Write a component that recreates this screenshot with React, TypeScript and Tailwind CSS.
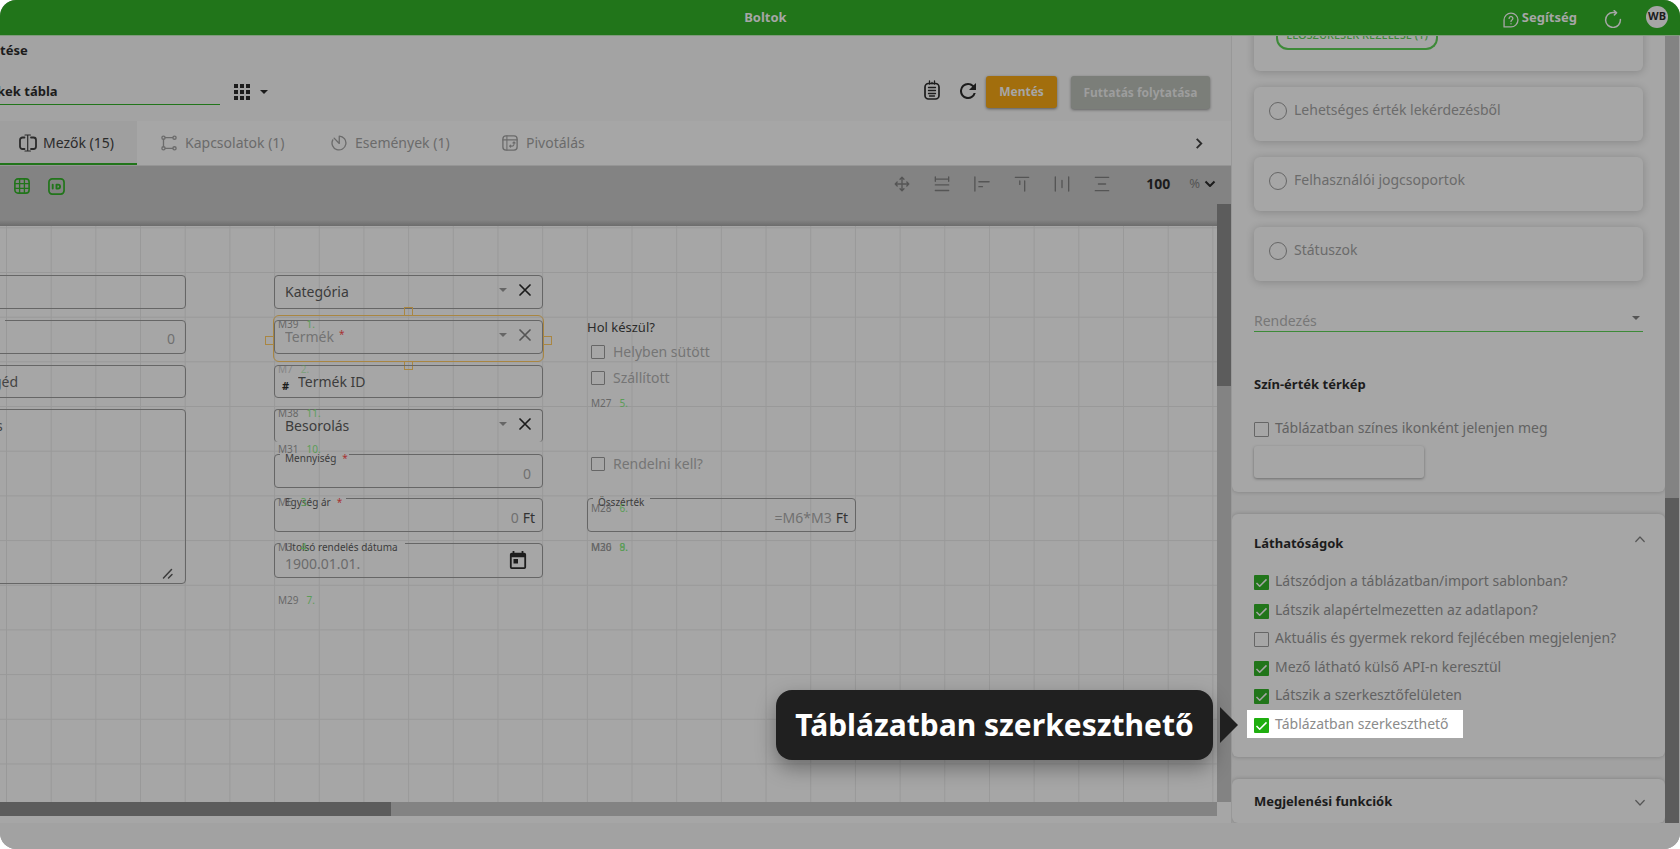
import React from "react";

type IconProps = { className?: string; children?: React.ReactNode; box?: string };

function Icon({ className = "size-4", children, box = "0 0 18 18" }: IconProps) {
  return (
    <svg
      className={`shrink-0 ${className}`}
      viewBox={box}
      fill="none"
      stroke="currentColor"
      strokeWidth="1.5"
      strokeLinecap="round"
      strokeLinejoin="round"
      aria-hidden="true"
    >
      {children}
    </svg>
  );
}

function Caret({ className }: { className: string }) {
  return (
    <Icon className={className} box="0 0 8 4">
      <path d="M0 0h8L4 4z" fill="currentColor" stroke="none" />
    </Icon>
  );
}

/* ---------- top bar ---------- */

function TopBar() {
  return (
    <header className="flex h-9 shrink-0 items-center border-b border-[#7f9a7c] bg-[#21751a] pb-0.5 text-[#a6a6a6]">
      <h1 className="flex-1 pl-7 text-center text-[13px] leading-5 font-bold">Boltok</h1>
      <a href="#help" className="mt-0.5 flex items-center gap-[3px] text-[13px] font-bold">
        <Icon className="mt-1 size-4">
          <path d="M1.2 9A7.8 7.8 0 1 1 9 16.8H1.2z" />
          <path d="M6.9 7.2a2.1 2.1 0 1 1 3.2 1.8c-.8.5-1.1.8-1.1 1.7M9 13.1v.1" />
        </Icon>
        Segítség
      </a>
      <button type="button" aria-label="Frissítés" className="mt-1 ml-[27px]">
        <Icon className="size-[18px]">
          <path d="M16.4 9.5A7.4 7.4 0 1 1 9 2.6h3" />
          <path d="M10.2 .6 12.6 2.7 10.4 4.9" />
        </Icon>
      </button>
      <span className="mr-3 ml-6 flex size-[22px] items-center justify-center rounded-full bg-[#a6a6a6] text-[11px] font-bold text-[#1c1c1c]">
        WB
      </span>
    </header>
  );
}

/* ---------- title, name and actions ---------- */

function Heading() {
  return (
    <div className="shrink-0 bg-[#a3a3a3] text-[#1c1c1c]">
      <h2 className="flex h-[29px] items-center text-[13px] font-bold">tése</h2>
      <div className="flex h-14 items-start pr-[21px]">
        <input
          aria-label="Tábla neve"
          defaultValue="kek tábla"
          className="mt-3 -ml-[3px] h-7 w-[223px] border-b border-[#21751a] bg-transparent text-[13px] font-bold outline-none"
        />
        <button type="button" aria-label="Nézet" className="mt-[19px] ml-3.5 flex items-center gap-2.5">
          <Icon className="size-4" box="0 0 16 16">
            <path
              d="M0 0h4v4H0zM6 0h4v4H6zM12 0h4v4h-4zM0 6h4v4H0zM6 6h4v4H6zM12 6h4v4h-4zM0 12h4v4H0zM6 12h4v4H6zM12 12h4v4h-4z"
              fill="currentColor"
              stroke="none"
            />
          </Icon>
          <Caret className="h-1 w-2" />
        </button>
        <span className="flex-1" />
        <button type="button" aria-label="Jegyzet" className="mt-[15px] mr-5">
          <Icon className="h-5 w-4" box="0 0 16 20">
            <rect x="1" y="3.5" width="14" height="15.5" rx="3.5" strokeWidth="1.7" />
            <path d="M5.5 1v3M10.5 1v3M8 2.5v1M4.500 7.5h7M4.500 10.500h7M4.500 13.500h7M5.500 16h5" strokeWidth="1.3" />
          </Icon>
        </button>
        <button type="button" aria-label="Újratöltés" className="mt-[18px] mr-2.5">
          <Icon className="size-4" box="4 4 16 16">
            <path
              d="M17.65 6.35A7.96 7.96 0 0 0 12 4a8 8 0 1 0 7.73 10h-2.08A6 6 0 1 1 12 6c1.66 0 3.14.69 4.22 1.78L13 11h7V4z"
              fill="currentColor"
              stroke="none"
            />
          </Icon>
        </button>
        <button
          type="button"
          className="mt-[11px] h-8 w-[71px] rounded-[3px] bg-[#a26e0d] text-xs font-bold text-[#a6a6a6] shadow-[0_1px_3px_rgba(0,0,0,0.45)]"
        >
          Mentés
        </button>
        <button
          type="button"
          className="mt-[11px] ml-3.5 h-[33px] w-[139px] rounded-[3px] bg-[#7b7e79] text-xs font-bold text-[#9d9d9d] shadow-[0_1px_3px_rgba(0,0,0,0.4)]"
        >
          Futtatás folytatása
        </button>
      </div>
    </div>
  );
}

function Tabs() {
  const base = "flex items-center gap-2 text-sm ";
  return (
    <nav className="flex h-[44px] shrink-0 bg-[#a6a6a6] text-[#6b6b6b]">
      <button type="button" className="flex w-[137px] items-center gap-1.5 border-b-2 border-[#21751a] bg-[#9f9f9f] pt-0.5 pl-[19px] text-sm text-[#2b2b2b]">
        <Icon className="size-[18px]">
          <path d="M5.5 3.5h-2A2.5 2.5 0 0 0 1 6v6.5A2.5 2.5 0 0 0 3.5 15h2M12 3.5h2.5A2.5 2.5 0 0 1 17 6v6.5a2.5 2.5 0 0 1-2.5 2.500H12" strokeWidth="1.8" />
          <path d="M8.7 1v16M6 1h5.4M6 17h5.4" strokeWidth="1.2" />
        </Icon>
        Mezők (15)
      </button>
      <button type="button" className={base + "w-[170px] pl-6"}>
        <Icon className="size-4">
          <circle cx="2.8" cy="3" r="1.8" />
          <circle cx="15.2" cy="3" r="1.8" />
          <circle cx="2.8" cy="15" r="1.8" />
          <circle cx="15.2" cy="15" r="1.8" />
          <path d="M4.8 3h8.4M4.8 15h8.4M2.8 5v8" />
        </Icon>
        Kapcsolatok (1)
      </button>
      <button type="button" className={base + "w-[171px] pl-6"}>
        <Icon className="size-4">
          <path d="M9.300 1.200A7.800 7.800 0 1 1 2 5.500M9.300 1.200v8.300L3.500 3.500" />
        </Icon>
        Események (1)
      </button>
      <button type="button" className={base + "w-[140px] pl-6"}>
        <Icon className="size-4">
          <rect x="1" y="1" width="16" height="16" rx="3.5" />
          <path d="M1 5.5h16M5.5 1v16" strokeWidth="1.2" />
          <path d="M13.5 8v2.5a2 2 0 0 1-2 2H8.5M12.3 9l1.200-1.200L14.700 9M9.700 11.300 8.500 12.500l1.200 1.200" strokeWidth="1.2" />
        </Icon>
        Pivotálás
      </button>
      <span className="flex-1" />
      <button type="button" aria-label="Következő fülek" className="mr-7 text-[#2b2b2b]">
        <Icon className="h-[11px] w-2" box="0 0 8 12">
          <path d="M1.5 1 6.5 6l-5 5" strokeWidth="2" strokeLinecap="butt" strokeLinejoin="miter" />
        </Icon>
      </button>
    </nav>
  );
}

function Toolbar() {
  const tools: [string, React.ReactNode][] = [
    ["Mozgatás", <path key="p" d="M9 1.5v15M1.5 9h15M6.8 3.6 9 1.4l2.200 2.200M6.800 14.400 9 16.600l2.200-2.200M3.600 6.800 1.400 9l2.200 2.200M14.400 6.800 16.600 9l-2.200 2.200" />],
    ["Azonos szélesség", <path key="p" d="M1.5 1v5M16.5 1v5M1.5 3.5h15M1.5 10h15M1.5 16.3h15" />],
    ["Balra igazítás", <path key="p" d="M1 1v16M5.5 6.5h11.5M5.5 12h4" />],
    ["Fel igazítás", <path key="p" d="M1.5 1.5h15M12 5.5v11.5M6.5 5.5v4" />],
    ["Vízszintes elosztás", <path key="p" d="M1.5 1v16M16.5 1v16M9 5v8" />],
    ["Függőleges elosztás", <path key="p" d="M1.5 1.5h15M1.5 16.5h15M5 9h8" />],
  ];
  return (
    <div className="flex h-[39px] shrink-0 items-center border-t border-[#959595] bg-[#838383] pb-0.5 text-[#555555]">
      <div className="mt-1 ml-3.5 flex gap-[18px] text-[#21751a]">
        <button type="button" aria-label="Rács">
          <Icon className="size-4">
            <rect x="1" y="1" width="16" height="16" rx="3.5" strokeWidth="1.8" />
            <path d="M6.3 1v16M11.7 1v16M1 6.3h16M1 11.7h16" />
          </Icon>
        </button>
        <button type="button" aria-label="Azonosítók">
          <Icon className="size-[17px]">
            <rect x="1" y="1" width="16" height="16" rx="3.5" strokeWidth="1.8" />
            <path d="M5 7v4.2M9 7h1.7a2.1 2.1 0 0 1 0 4.200H9z" strokeWidth="2" />
          </Icon>
        </button>
      </div>
      <span className="flex-1" />
      <div className="flex gap-6">
        {tools.map(([name, art]) => (
          <button key={name} type="button" aria-label={name}>
            <Icon className="size-4">{art}</Icon>
          </button>
        ))}
      </div>
      <input aria-label="Nagyítás" defaultValue="100" className="ml-9 w-8 bg-transparent text-sm font-bold text-[#1c1c1c] outline-none" />
      <span className="ml-[11px] text-[13px]">%</span>
      <button type="button" aria-label="Nagyítás választása" className="mr-[15px] ml-1 text-[#1c1c1c]">
        <Icon className="h-2 w-3" box="0 0 12 8">
          <path d="m1.5 1.5 4.5 4.5 4.5-4.5" strokeWidth="2" strokeLinecap="butt" />
        </Icon>
      </button>
    </div>
  );
}

/* ---------- form canvas ---------- */

function Frame({ notch }: { notch?: string }) {
  return (
    <fieldset aria-hidden="true" className="pointer-events-none absolute inset-0 rounded-[4px] border border-[#666666] pl-[5px]">
      {notch && <legend className={"h-0 " + notch} />}
    </fieldset>
  );
}

function Code({ at, id, order, className = "" }: { at: string; id: string; order: string; className?: string }) {
  return (
    <span className={`absolute flex gap-2 text-[10px] leading-3 text-[#686868] ${at} ${className}`}>
      <span>{id}</span>
      <span className="text-[#5b9d57]">{order}</span>
    </span>
  );
}

function PickField({ at, label, required, faded, open }: { at: string; label: string; required?: boolean; faded?: boolean; open?: boolean }) {
  return (
    <div
      className={`absolute flex w-[269px] items-center ${at} ${faded ? "text-[#737373]" : "text-[#3c3c3c]"} ${
        open ? "h-[33px] rounded-[4px] border border-b-0 border-[#666666] pr-[11px]" : "h-[34px] pr-3"
      }`}
    >
      {!open && <Frame />}
      <select
        aria-label={label}
        className={`absolute inset-0 appearance-none bg-transparent text-sm outline-none ${open ? "pl-2.5" : "pl-[11px]"}`}
      >
        <option>{label}</option>
      </select>
      {required && <span className="absolute top-1.5 left-[65px] text-[10px] leading-4 text-[#a83232]">*</span>}
      <span className="flex-1" />
      <Caret className="mb-1 h-1 w-2 text-[#666666]" />
      <button type="button" aria-label={"Törlés: " + label} className={`relative mb-1 ml-3 ${faded ? "text-[#555555]" : "text-[#1c1c1c]"}`}>
        <Icon className="size-3" box="0 0 12 12">
          <path d="m1 1 10 10M11 1 1 11" strokeWidth="1.7" />
        </Icon>
      </button>
    </div>
  );
}

function ValueField({
  at, label, value, notch, required, unit,
}: { at: string; label: string; value: string; notch: string; required?: boolean; unit?: string }) {
  return (
    <label className={`absolute h-[34px] w-[269px] ${at}`}>
      <Frame notch={notch} />
      <span className="absolute -top-1 left-[11px] text-[10px] leading-4 whitespace-nowrap text-[#3c3c3c]">
        {label}
        {required && <span className="ml-1.5 text-[#a83232]">*</span>}
      </span>
      <span className="absolute inset-x-0 bottom-1 flex items-center gap-1 pr-2">
        <input defaultValue={value} className="w-0 flex-1 bg-transparent text-right text-sm leading-5 text-[#707070] outline-none" />
        {unit ? <span className="text-sm leading-5 text-[#333333]">{unit}</span> : <span />}
      </span>
    </label>
  );
}

function CanvasCheck({ at, label }: { at: string; label: string }) {
  return (
    <label className={`absolute flex items-center gap-2 text-sm leading-5 text-[#757575] ${at}`}>
      <input type="checkbox" className="size-3.5 appearance-none rounded-[1px] border border-[#666666]" />
      {label}
    </label>
  );
}

const handle = "absolute size-[9px] border border-[#a98642]";

function Canvas() {
  return (
    <div className="flex min-h-0 flex-1 bg-[#a6a6a6]">
      <div className="flex min-w-0 flex-1 flex-col">
        <div className="flex h-[22px] shrink-0 flex-col justify-end bg-[#838383]">
          <div className="h-1.5 bg-linear-to-b from-[#838383] to-[#6c6c6c]" />
        </div>
        <div className="relative min-h-0 flex-1 overflow-hidden bg-[#a6a6a6]">
          <svg className="absolute inset-0 size-full" aria-hidden="true">
            <defs>
              <pattern id="grid" x="6" y="1.3" width="44.68" height="44.68" patternUnits="userSpaceOnUse">
                <path d="M.5 0v44.68M0 .5h44.68" stroke="#999999" strokeWidth="1" />
              </pattern>
            </defs>
            <rect width="100%" height="100%" fill="url(#grid)" />
          </svg>

          <label className="absolute top-[49px] -left-[83px] h-[34px] w-[269px]">
            <Frame />
            <input aria-label="Név" className="absolute inset-0 bg-transparent px-3 outline-none" />
          </label>
          <label className="absolute top-[94px] -left-[83px] h-[34px] w-[269px]">
            <Frame notch="w-[82px]" />
            <input aria-label="Darab" defaultValue="0" className="absolute inset-0 bg-transparent pt-1 pr-[11px] text-right text-sm text-[#707070] outline-none" />
          </label>
          <div className="absolute top-[139px] -left-[83px] h-[33px] w-[269px]">
            <Frame />
            <input aria-label="Segéd" placeholder="géd" className="absolute inset-0 bg-transparent pl-[76px] text-sm outline-none placeholder:text-[#444444]" />
          </div>
          <div className="absolute top-[183px] -left-[83px] h-[175px] w-[269px]">
            <Frame />
            <textarea
              aria-label="Leírás"
              placeholder="s"
              className="absolute inset-0 resize-none bg-transparent pt-[7px] pl-[79px] text-sm outline-none placeholder:text-[#444444]"
            />
            <Icon className="absolute right-3 bottom-1 size-3 text-[#3c3c3c]" box="0 0 12 12">
              <path d="M1.5 10 9.5 1.5M6.5 10l3.5-3.5" />
            </Icon>
          </div>

          <PickField at="top-[49px] left-[274px]" label="Kategória" />
          <PickField at="top-[94px] left-[274px]" label="Termék" required faded />
          <div className="pointer-events-none absolute top-[89px] left-[273px] h-[47px] w-[271px] rounded-[6px] border border-[#a98642]">
            <span className={handle + " -top-[9px] left-[130px]"} />
            <span className={handle + " -bottom-[9px] left-[130px]"} />
            <span className={handle + " top-5 -left-[9px]"} />
            <span className={handle + " top-5 -right-[9px]"} />
          </div>

          <div className="absolute top-[139px] left-[274px] h-[33px] w-[269px]">
            <Frame />
            <span className="absolute top-[13px] left-2 text-[11px] leading-4 font-bold text-[#1c1c1c]">#</span>
            <input aria-label="Termék ID" placeholder="Termék ID" className="absolute inset-0 bg-transparent pl-6 text-sm outline-none placeholder:text-[#3c3c3c]" />
          </div>
          <PickField at="top-[183px] left-[274px]" label="Besorolás" open />
          <ValueField at="top-[228px] left-[274px]" label="Mennyiség" value="0" notch="w-[69px]" required />
          <ValueField at="top-[272px] left-[274px]" label="Egység ár" value="0" notch="w-[66px]" required unit="Ft" />

          <label className="absolute top-[317px] left-[274px] h-[35px] w-[269px]">
            <Frame notch="w-[125px]" />
            <span className="absolute -top-1 left-[11px] text-[10px] leading-4 text-[#3c3c3c]">Utolsó rendelés dátuma</span>
            <input defaultValue="1900.01.01." className="absolute bottom-1 left-[11px] w-40 bg-transparent text-sm leading-5 text-[#6b6b6b] outline-none" />
            <Icon className="absolute top-2 right-4 h-[18px] w-[18px] text-[#1c1c1c]" box="3 2 18 20">
              <path
                d="M19 4h-1V2h-2v2H8V2H6v2H5a2 2 0 0 0-2 2v14a2 2 0 0 0 2 2h14a2 2 0 0 0 2-2V6a2 2 0 0 0-2-2zm0 16H5V9h14zM7 11h5v5H7z"
                fill="currentColor"
                stroke="none"
              />
            </Icon>
          </label>

          <Code at="top-[92px] left-[278px]" id="M39" order="1." />
          <Code at="top-[137px] left-[278px]" id="M7" order="2." className="opacity-50" />
          <Code at="top-[181px] left-[278px]" id="M38" order="11." />
          <Code at="top-[217px] left-[278px]" id="M31" order="10." />
          <Code at="top-[270px] left-[278px]" id="M6" order="3." />
          <Code at="top-[315px] left-[278px]" id="M3" order="4." />
          <Code at="top-[368px] left-[278px]" id="M29" order="7." />

          <span className="absolute top-[91px] left-[587px] text-[13px] leading-5 text-[#2b2b2b]">Hol készül?</span>
          <CanvasCheck at="top-[116px] left-[591px]" label="Helyben sütött" />
          <CanvasCheck at="top-[142px] left-[591px]" label="Szállított" />
          <Code at="top-[171px] left-[591px]" id="M27" order="5." />
          <CanvasCheck at="top-[228px] left-[591px]" label="Rendelni kell?" />
          <ValueField at="top-[272px] left-[587px]" label="Összérték" value="=M6*M3" notch="w-[57px]" unit="Ft" />
          <Code at="top-[276px] left-[591px]" id="M28" order="6." />
          <Code at="top-[315px] left-[591px]" id="M30" order="8." />
          <Code at="top-[315px] left-[591px]" id="M26" order="9." />
        </div>
        <div className="h-3.5 shrink-0 bg-[#838383]">
          <div className="h-full w-[391px] bg-[#5c5c5c]" />
        </div>
      </div>
      <div className="flex w-3.5 shrink-0 flex-col">
        <div className="flex-1 bg-[#838383]">
          <div className="h-[182px] bg-[#5c5c5c]" />
        </div>
        <div className="h-3.5" />
      </div>
    </div>
  );
}

/* ---------- side panel ---------- */

const card = "rounded-[6px] bg-[#a6a6a6] shadow-[0_1px_8px_rgba(0,0,0,0.2)]";
const section = "rounded-[6px] bg-[#a6a6a6] shadow-[0_0_4px_rgba(0,0,0,0.22)]";

function RadioCard({ label }: { label: string }) {
  return (
    <label className={card + " flex h-[54px] items-start gap-[7px] pt-[13px] pl-[15px] text-sm leading-5 text-[#6b6b6b]"}>
      <input type="radio" name="source" className="mt-0.5 size-[18px] appearance-none rounded-full border border-[#666666]" />
      {label}
    </label>
  );
}

function Check({ label, checked, marked }: { label: string; checked?: boolean; marked?: boolean }) {
  return (
    <label
      className={`-ml-[7px] flex h-[29px] w-fit items-center gap-1.5 pr-3.5 pl-[7px] text-sm leading-5 ${
        marked ? "bg-white text-[#8b8b8b]" : "text-[#626262]"
      }`}
    >
      <span className="mt-[3px] grid size-[15px]">
        <input
          type="checkbox"
          defaultChecked={checked}
          className={`col-start-1 row-start-1 appearance-none rounded-[1px] border border-[#666666] checked:border-0 ${
            marked ? "checked:bg-[#1fae0f]" : "checked:bg-[#21751a]"
          }`}
        />
        {checked && (
          <Icon className={`pointer-events-none col-start-1 row-start-1 size-[15px] ${marked ? "text-white" : "text-[#a6a6a6]"}`} box="0 0 15 15">
            <path d="m2.5 8 3.2 3.2 6.8-6.8" strokeLinecap="butt" />
          </Icon>
        )}
      </span>
      {label}
    </label>
  );
}

function SidePanel() {
  return (
    <aside className="flex w-[449px] shrink-0 border-l border-[#989898] bg-[#a1a1a1]">
      <div className="flex min-w-0 flex-1 flex-col gap-[22px] overflow-hidden">
        <section className={section + " -mt-5 shrink-0 px-[22px] pb-3.5"}>
          <div className="flex flex-col gap-4">
            <div className={card + " h-[55px] pl-[22px]"}>
              <button type="button" className="h-[34px] w-[162px] rounded-b-[12px] border-2 border-t-0 border-[#3d8a38] pt-1.5 text-[11px] font-medium whitespace-nowrap text-[#3d8a38]">
                ELŐSZŰRÉSEK KEZELÉSE (1)
              </button>
            </div>
            <RadioCard label="Lehetséges érték lekérdezésből" />
            <RadioCard label="Felhasználói jogcsoportok" />
            <RadioCard label="Státuszok" />
          </div>
          <div className="relative mt-[29px] flex h-[22px] items-center border-b border-[#3d8a38] text-[#555555]">
            <select aria-label="Rendezés" className="w-full appearance-none bg-transparent text-sm leading-5 text-[#777777] outline-none">
              <option>Rendezés</option>
            </select>
            <Caret className="mr-[3px] mb-1.5 h-1 w-2" />
          </div>
          <h3 className="mt-[42px] text-[13px] leading-5 font-bold text-[#1c1c1c]">Szín-érték térkép</h3>
          <div className="mt-[19px]">
            <Check label="Táblázatban színes ikonként jelenjen meg" />
          </div>
          <button type="button" aria-label="Színek" className="mt-1 block h-8 w-[170px] rounded-[3px] shadow-[0_1px_3px_rgba(0,0,0,0.35)]" />
        </section>

        <section className={section + " h-[243px] shrink-0 px-[22px] pt-[19px]"}>
          <h3 className="flex items-start justify-between text-[13px] leading-5 font-bold text-[#1c1c1c]">
            Láthatóságok
            <Icon className="mt-0.5 -mr-0.5 h-2 w-2.5 text-[#555555]" box="0 0 10 8">
              <path d="m.8 6.5 4.2-4.5 4.2 4.5" strokeWidth="1.200" />
            </Icon>
          </h3>
          <div className="mt-3.5 flex h-[171px] flex-col justify-between">
            <Check label="Látszódjon a táblázatban/import sablonban?" checked />
            <Check label="Látszik alapértelmezetten az adatlapon?" checked />
            <Check label="Aktuális és gyermek rekord fejlécében megjelenjen?" />
            <Check label="Mező látható külső API-n keresztül" checked />
            <Check label="Látszik a szerkesztőfelületen" checked />
            <Check label="Táblázatban szerkeszthető" checked marked />
          </div>
        </section>

        <section className={section + " min-h-[43px] flex-1 px-[22px] pt-3"}>
          <h3 className="flex items-center justify-between text-[13px] leading-5 font-bold text-[#1c1c1c]">
            Megjelenési funkciók
            <Icon className="mt-1 -mr-0.5 h-2 w-2.5 text-[#555555]" box="0 0 10 8">
              <path d="m.8 1.5 4.2 4.5 4.2-4.5" strokeWidth="1.200" />
            </Icon>
          </h3>
        </section>
      </div>
      <div className="flex w-3.5 shrink-0 flex-col justify-end bg-[#838383]">
        <div className="h-[325px] bg-[#5c5c5c]" />
      </div>
      <div className="w-px" />
    </aside>
  );
}

function Callout() {
  return (
    <div className="absolute right-[442px] bottom-[89px] flex items-center gap-[7px]">
      <div className="flex h-[70px] w-[437px] items-center justify-center rounded-2xl bg-[#202020] text-[30px] leading-10 font-bold whitespace-nowrap text-white shadow-[0_8px_20px_rgba(0,0,0,0.35)]">
        Táblázatban szerkeszthető
      </div>
      <Icon className="h-9 w-[18px] text-[#202020]" box="0 0 18 36">
        <path d="M0 0v36l18-18z" fill="currentColor" stroke="none" />
      </Icon>
    </div>
  );
}

export default function App() {
  return (
    <div className="bg-white font-['Noto_Sans',sans-serif]">
      <div className="relative flex h-screen flex-col overflow-hidden rounded-2xl bg-[#a3a3a3]">
        <TopBar />
        <div className="flex min-h-0 flex-1">
          <main className="flex min-w-0 flex-1 flex-col bg-[#a6a6a6] pb-[7px]">
            <Heading />
            <Tabs />
            <Toolbar />
            <Canvas />
          </main>
          <SidePanel />
        </div>
        <footer className="h-[26px] shrink-0 bg-[#a2a2a2]" />
        <Callout />
      </div>
    </div>
  );
}
